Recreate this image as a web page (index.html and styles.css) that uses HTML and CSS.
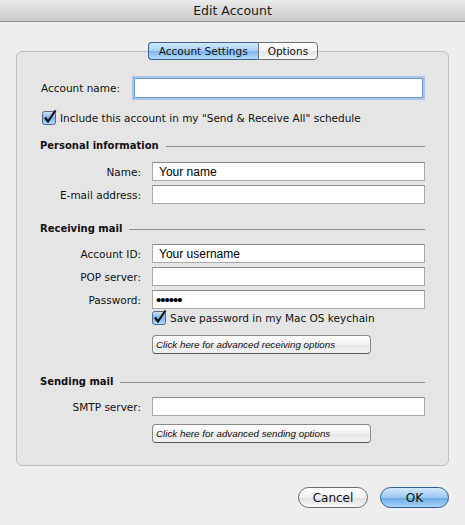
FILE: index.html
```html
<!DOCTYPE html>
<html lang="en">
<head>
  <meta charset="UTF-8" />
  <title>Edit Account</title>
  <link rel="stylesheet" href="styles.css">
</head>
<body>
  <div class="titlebar">Edit Account</div>

  <div class="content">
    <div class="group">
      <div class="tabs">
        <span class="tab active">Account Settings</span>
        <span class="tab">Options</span>
      </div>

      <div class="row account-row">
        <label class="label-short">Account name:</label>
        <input class="field focused" type="text" value="" />
      </div>

      <div class="check-row include-row">
        <svg class="check" width="15" height="15" viewBox="0 0 15 15">
          <defs>
            <linearGradient id="cb" x1="0" y1="0" x2="0" y2="1">
              <stop offset="0" stop-color="#cfe4f9"/>
              <stop offset="0.5" stop-color="#7fb2e6"/>
              <stop offset="1" stop-color="#b9d9f7"/>
            </linearGradient>
          </defs>
          <rect x="0.5" y="1.5" width="13" height="13" rx="2" fill="url(#cb)" stroke="#4d6c93"/>
          <path d="M3 7.5 L6 11.5 L13.5 0.5" fill="none" stroke="#111" stroke-width="2.2" stroke-linejoin="round"/>
        </svg>
        <span>Include this account in my "Send &amp; Receive All" schedule</span>
      </div>

      <div class="heading personal">Personal information</div>

      <div class="row first">
        <label>Name:</label>
        <input class="field" type="text" value="Your name" />
      </div>
      <div class="row">
        <label>E-mail address:</label>
        <input class="field" type="text" value="" />
      </div>

      <div class="heading receiving">Receiving mail</div>

      <div class="row id-row">
        <label>Account ID:</label>
        <input class="field" type="text" value="Your username" />
      </div>
      <div class="row">
        <label>POP server:</label>
        <input class="field" type="text" value="" />
      </div>
      <div class="row">
        <label>Password:</label>
        <input class="field" type="password" value="secret" />
      </div>

      <div class="check-row keychain-row">
        <svg class="check" width="15" height="15" viewBox="0 0 15 15">
          <rect x="0.5" y="1.5" width="13" height="13" rx="2" fill="url(#cb)" stroke="#4d6c93"/>
          <path d="M3 7.5 L6 11.5 L13.5 0.5" fill="none" stroke="#111" stroke-width="2.2" stroke-linejoin="round"/>
        </svg>
        <span>Save password in my Mac OS keychain</span>
      </div>

      <div class="indent adv-receive">
        <button class="adv" type="button">Click here for advanced receiving options</button>
      </div>

      <div class="heading sending">Sending mail</div>

      <div class="row id-row">
        <label>SMTP server:</label>
        <input class="field" type="text" value="" />
      </div>

      <div class="indent adv-send">
        <button class="adv" type="button">Click here for advanced sending options</button>
      </div>
    </div>

    <div class="actions">
      <button class="pill" type="button">Cancel</button>
      <button class="pill default" type="button">OK</button>
    </div>
  </div>
</body>
</html>
```

FILE: styles.css
```css
body {
  margin: 0;
  background: #eeeeee;
  font-family: 'DejaVu Sans', sans-serif;
  font-size: 10.5px;
  color: #111;
}

.titlebar {
  height: 21px;
  line-height: 21px;
  text-align: center;
  font-size: 12.5px;
  color: #1a1a1a;
  background: linear-gradient(#ececec, #d9d9d9 50%, #cbcbcb);
  border-bottom: 1px solid #8a8a8a;
}

.content {
  padding: 0 16px;
}

.group {
  margin-top: 29px;
  background: #e5e5e5;
  border: 1px solid #bdbdbd;
  border-radius: 6px;
  padding: 0 23px 22px 23px;
}

.tabs {
  display: flex;
  justify-content: center;
  margin-top: -10px;
  margin-left: 1px;
}

.tab {
  height: 18px;
  box-sizing: border-box;
  line-height: 16px;
  padding: 0 9px;
  border: 1px solid #6f6f6f;
  background: linear-gradient(#ffffff, #f3f3f3 50%, #e4e4e4 51%, #f7f7f7);
  color: #111;
}

.tab.active {
  border-radius: 4px 0 0 4px;
  border-right: none;
  border-color: #3b5e8c;
  background: linear-gradient(#d3e8fc, #a7cff5 50%, #7db6ec 51%, #b5dafb);
  padding: 0 10px;
}

.tab:last-child {
  border-radius: 0 4px 4px 0;
}

.row {
  display: flex;
  align-items: center;
  margin-top: 4px;
}

.row label {
  width: 101px;
  text-align: right;
  margin-right: 11px;
  flex: none;
}

.row label.label-short {
  width: 80px;
  margin-right: 12px;
}

.account-row {
  margin-top: 18px;
}

.field {
  flex: 1;
  height: 19px;
  box-sizing: border-box;
  margin: 0;
  padding: 0 6px;
  border: 1px solid #a9a9a9;
  border-top-color: #8a8a8a;
  background: #fff;
  font-family: 'Liberation Sans', sans-serif;
  font-size: 12px;
  color: #000;
  outline: none;
}

.field.focused {
  height: 20px;
  border: 1px solid #6c95c9;
  box-shadow: 0 0 0 2px #a9c6ea;
  margin: 0 2px 0 2px;
}

.field[type=password] {
  font-size: 15px;
  padding-left: 3px;
  letter-spacing: -1px;
}

.check-row {
  display: flex;
  align-items: center;
  height: 14px;
  margin-top: 13px;
  margin-left: 2px;
}

.check {
  flex: none;
  margin-right: 3px;
  margin-top: -2px;
}

.indent {
  margin-left: 112px;
}

.keychain-row {
  margin-top: 2px;
  margin-left: 112px;
}

.heading {
  display: flex;
  align-items: center;
  font-weight: bold;
  font-size: 10px;
  height: 14px;
}

.heading::after {
  content: "";
  flex: 1;
  border-top: 1px solid #8d8d8d;
  margin-left: 7px;
  margin-top: 3px;
}

.personal {
  margin-top: 13px;
}

.first {
  margin-top: 10px;
}

.receiving {
  margin-top: 17px;
}

.id-row {
  margin-top: 9px;
}

.adv-receive {
  margin-top: 10px;
}

.sending {
  margin-top: 20px;
}

.adv-send {
  margin-top: 8px;
}

.adv {
  width: 219px;
  height: 19px;
  padding: 0 3px;
  text-align: left;
  font-family: 'Liberation Sans', sans-serif;
  font-style: italic;
  font-size: 9.8px;
  color: #111;
  border: 1px solid #8a8a8a;
  border-bottom-color: #555;
  border-radius: 4px;
  background: linear-gradient(#ffffff, #f2f2f2 50%, #e6e6e6 51%, #f4f4f4);
}

.actions {
  display: flex;
  justify-content: flex-end;
  gap: 12px;
  margin-top: 21px;
}

.pill {
  width: 70px;
  height: 21px;
  border-radius: 11px;
  font-family: 'DejaVu Sans', sans-serif;
  font-size: 12px;
  color: #111;
  border: 1px solid #6a6a6a;
  background: linear-gradient(#ffffff, #f1f1f1 50%, #dedede 51%, #f8f8f8);
  padding: 0;
}

.pill.default {
  width: 69px;
  border-color: #2f5b94;
  background: linear-gradient(#d2e7fb, #9cc8f2 50%, #6aa9e6 51%, #a9d4fb);
}
```
